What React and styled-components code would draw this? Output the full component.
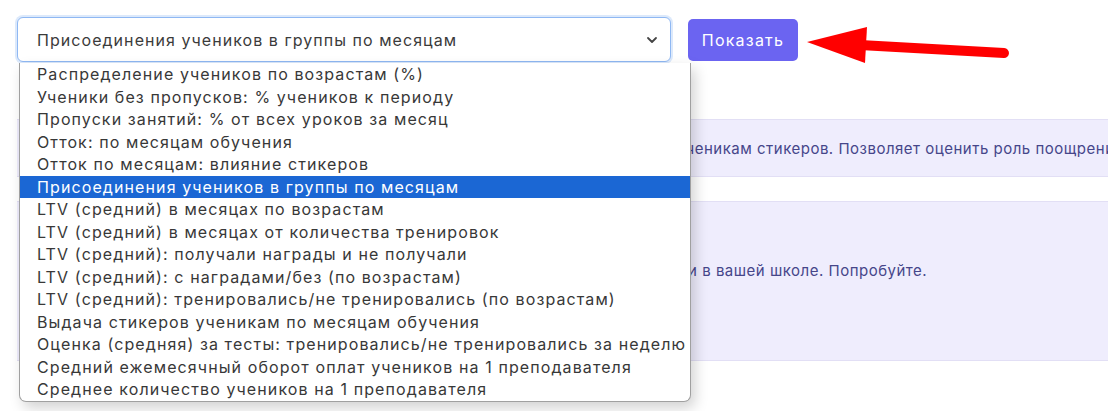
import React from "react";
import styled, { createGlobalStyle } from "styled-components";

const GlobalStyle = createGlobalStyle`
  html, body {
    margin: 0;
    padding: 0;
    background: #ffffff;
    overflow: hidden;
  }
  body {
    font-family: Inter, "Noto Sans", "Liberation Sans", sans-serif;
    width: 1108px;
    height: 411px;
  }
`;

const Page = styled.div`
  position: relative;
  padding: 17px 0 0 17px;
  width: 1108px;
  height: 411px;
  box-sizing: border-box;
  overflow: hidden;
`;

const Toolbar = styled.div`
  display: flex;
  align-items: center;
  gap: 17px;
  height: 45px;
`;

const SelectWrap = styled.div`
  position: relative;
  width: 654px;
`;

const SelectBox = styled.div`
  display: flex;
  align-items: center;
  justify-content: space-between;
  height: 45px;
  box-sizing: border-box;
  padding: 0 12px 0 19px;
  border: 1px solid #8fb8f3;
  border-radius: 6px;
  box-shadow: 0 0 0 2px #dce9fb;
  background: #fff;
  color: #3b3b3b;
  font-size: 16px;
  letter-spacing: 1.05px;
`;

const Chevron = styled.svg`
  width: 12px;
  height: 12px;
  color: #444;
`;

const ShowButton = styled.button`
  height: 42px;
  width: 110px;
  border: none;
  border-radius: 5px;
  background: #6b64f1;
  color: #fff;
  font-family: inherit;
  font-size: 16px;
  letter-spacing: 1.2px;
  cursor: pointer;
`;

const Arrow = styled.svg`
  position: absolute;
  left: 800px;
  top: 20px;
  width: 220px;
  height: 50px;
`;

const Panels = styled.div`
  display: flex;
  flex-direction: column;
  gap: 24px;
  margin-top: 57px;
`;

const Panel = styled.div`
  display: flex;
  flex-direction: column;
  justify-content: ${(p) => (p.$top ? "flex-start" : "center")};
  height: ${(p) => p.$h}px;
  box-sizing: border-box;
  padding: ${(p) => (p.$top ? `${p.$top}px` : "0")} 16px 0;
  margin-right: -40px;
  background: #efedfd;
  border-top: 1px solid #e2dff5;
  border-bottom: 1px solid #e2dff5;
  color: #46468a;
  font-size: 15px;
  letter-spacing: 0.5px;
  white-space: nowrap;
  overflow: hidden;
`;

const Dropdown = styled.ul`
  position: absolute;
  left: 2px;
  top: 46px;
  width: 670px;
  margin: 0;
  padding: 0;
  list-style: none;
  background: #fff;
  border: 1px solid #a0a0a0;
  border-top: none;
  border-radius: 0 0 7px 7px;
  box-shadow: 4px 6px 14px rgba(0, 0, 0, 0.18);
  overflow: hidden;
  z-index: 5;
`;

const Option = styled.li`
  height: 22.5px;
  line-height: 22.5px;
  padding-left: 17px;
  font-size: 16px;
  letter-spacing: 1.1px;
  white-space: nowrap;
  color: ${(p) => (p.$active ? "#ffffff" : "#383838")};
  background: ${(p) => (p.$active ? "#1b67d4" : "transparent")};
`;

const options = [
  "Распределение учеников по возрастам (%)",
  "Ученики без пропусков: % учеников к периоду",
  "Пропуски занятий: % от всех уроков за месяц",
  "Отток: по месяцам обучения",
  "Отток по месяцам: влияние стикеров",
  "Присоединения учеников в группы по месяцам",
  "LTV (средний) в месяцах по возрастам",
  "LTV (средний) в месяцах от количества тренировок",
  "LTV (средний): получали награды и не получали",
  "LTV (средний): с наградами/без (по возрастам)",
  "LTV (средний): тренировались/не тренировались (по возрастам)",
  "Выдача стикеров ученикам по месяцам обучения",
  "Оценка (средняя) за тесты: тренировались/не тренировались за неделю",
  "Средний ежемесячный оборот оплат учеников на 1 преподавателя",
  "Среднее количество учеников на 1 преподавателя",
];

const selected = 5;

export default function App() {
  return (
    <Page>
      <GlobalStyle />
      <Toolbar>
        <SelectWrap>
          <SelectBox>
            <span>{options[selected]}</span>
            <Chevron viewBox="0 0 12 12" fill="none">
              <path d="M2 4l4 4 4-4" stroke="currentColor" strokeWidth="1.8" strokeLinecap="round" strokeLinejoin="round" />
            </Chevron>
          </SelectBox>
          <Dropdown>
            {options.map((o, i) => (
              <Option key={o} $active={i === selected}>{o}</Option>
            ))}
          </Dropdown>
        </SelectWrap>
        <ShowButton>Показать</ShowButton>
      </Toolbar>
      <Arrow viewBox="0 0 220 50">
        <line x1="60" y1="25" x2="204" y2="33" stroke="#ff0000" strokeWidth="10" strokeLinecap="round" />
        <polygon points="7,22 67,7 65,43" fill="#ff0000" />
      </Arrow>
      <Panels>
        <Panel $h={58}>
          <div>Отчёт показывает отток по месяцам обучения в зависимости от числа выданных ученикам стикеров. Позволяет оценить роль поощрений в удержании учеников.</div>
        </Panel>
        <Panel $h={160} $top={59}>
          <div>Новые отчёты помогут понять, как растёт и удерживается число урока с учениками в вашей школе. Попробуйте.</div>
        </Panel>
      </Panels>
    </Page>
  );
}
